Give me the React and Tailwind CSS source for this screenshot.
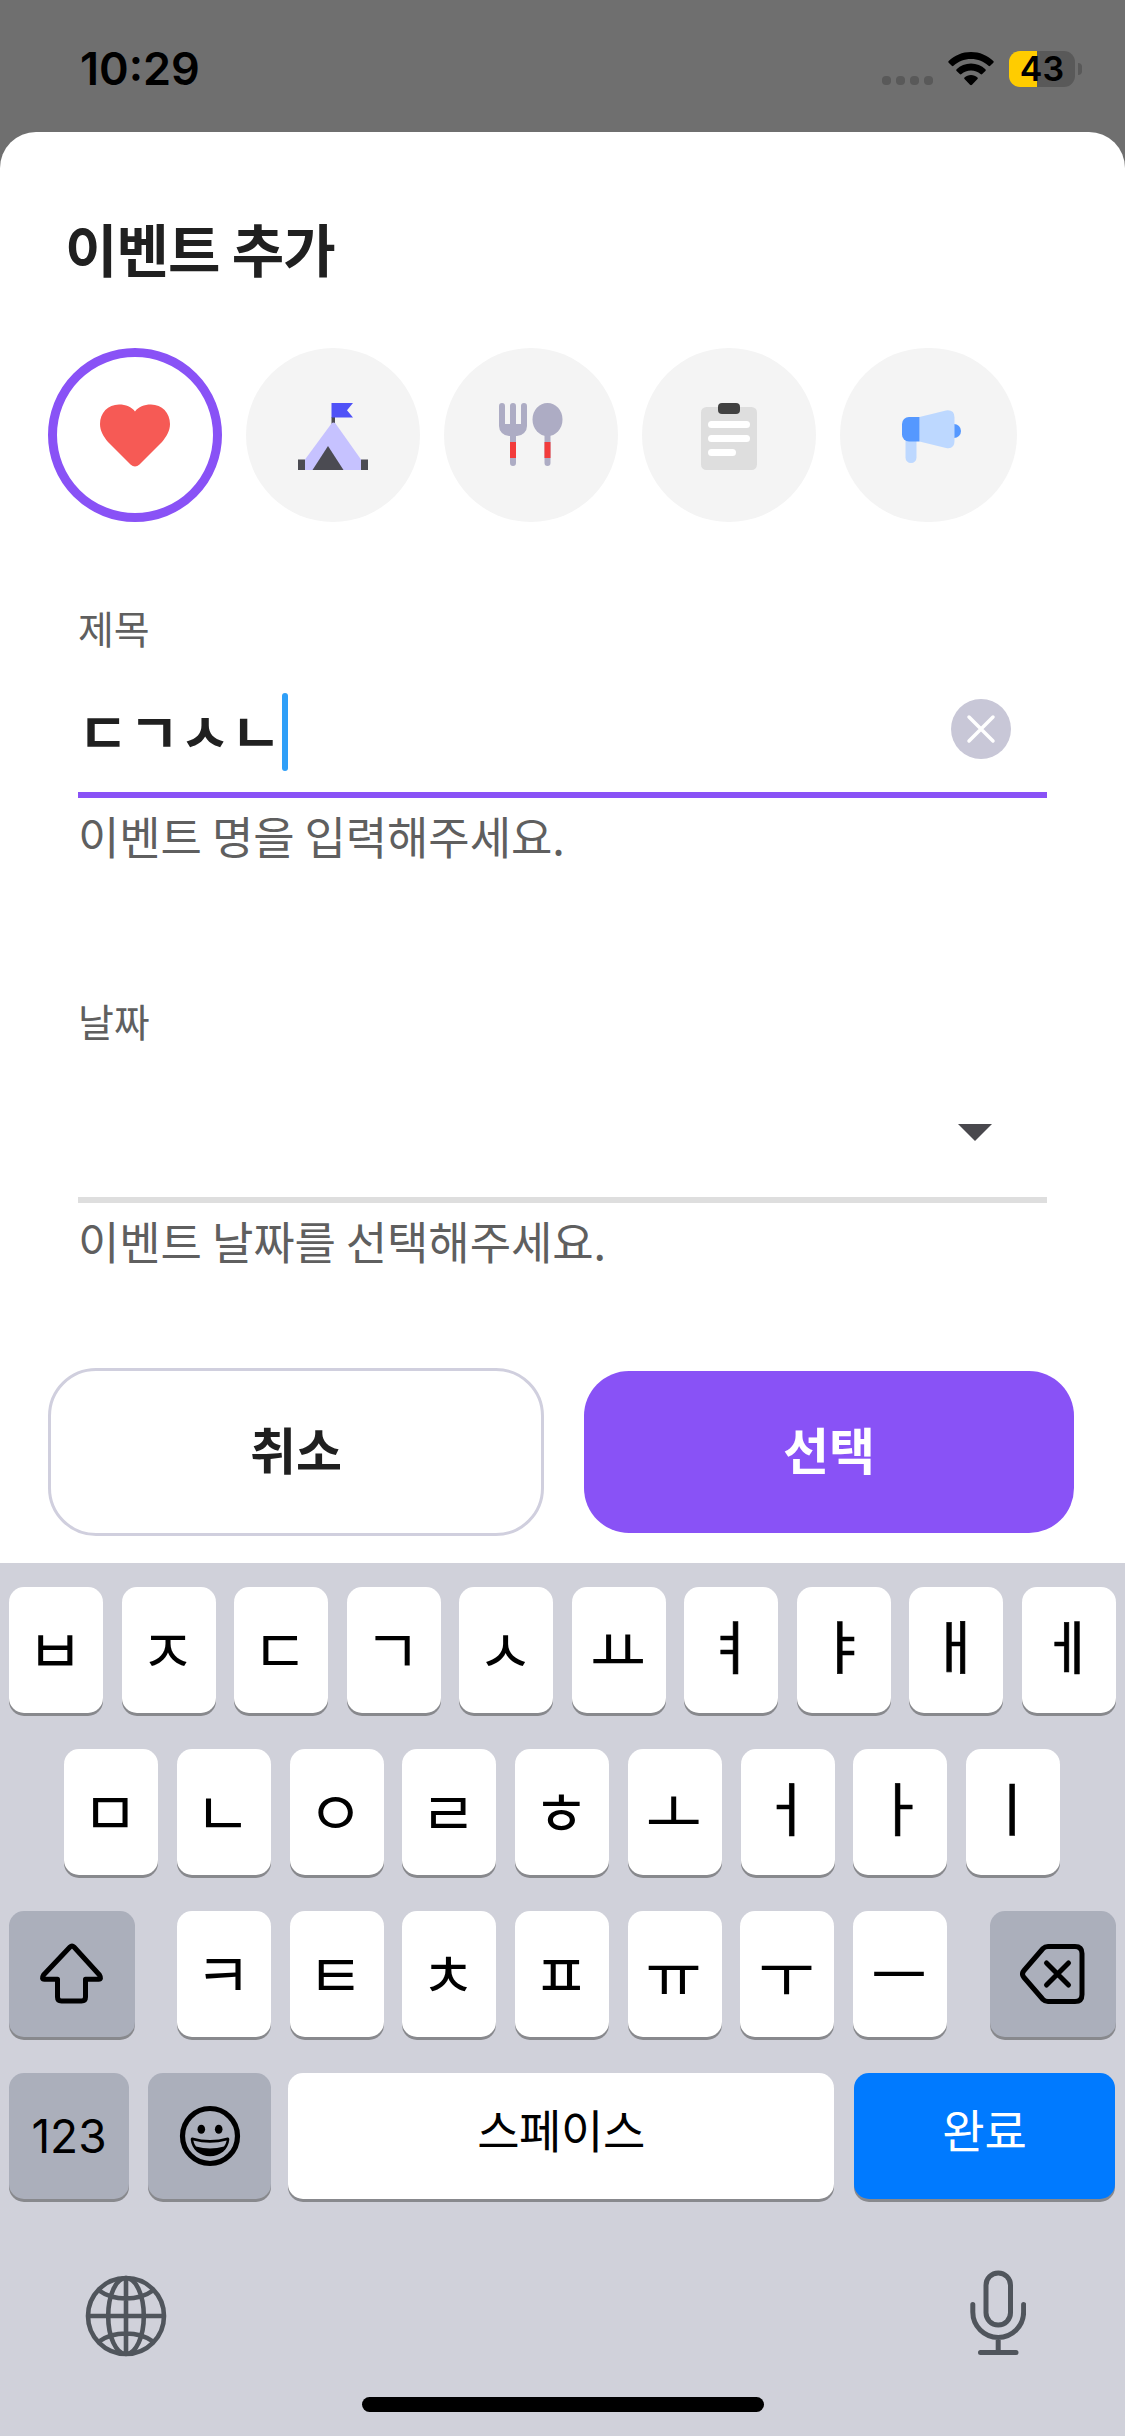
const kr = "font-['Noto_Sans_CJK_KR',sans-serif]";

const Heart = () => (
  <svg width="70" height="63" viewBox="0 0 70 63">
    <path d="M35 7.500C38.500 3 44 .6 51 .6C62 .6 70 9 70 20C70 27 66.500 32.500 62 38L39.500 60.500Q35 64.500 30.500 60.500L8 38C3.500 32.500 0 27 0 20C0 9 8 .6 19 .6C26 .6 31.500 3 35 7.500Z" fill="#f65a55" />
  </svg>
);

const Tent = () => (
  <svg className="mt-1" width="70" height="68" viewBox="0 0 70 68">
    <path d="M33.500 14h3.500v8h-3.500z" fill="#4b4b52" />
    <path d="M33.500 0H55l-6 7.200L55 14.500H33.500z" fill="#4f52f7" />
    <path d="M0 56.500h7V67H0zM63 56.500h7V67h-7z" fill="#4b4b52" />
    <path d="M33.500 20.500Q35.500 18.500 37.500 20.500L63 56.500V67H7V56.500z" fill="#c6c2ff" />
    <path d="M30 43L45.500 67H14.500z" fill="#4b4b52" />
  </svg>
);

const Cutlery = () => (
  <svg width="64" height="64" viewBox="0 0 64 64" fill="#adacc4">
    <path d="M0 3a3 3 0 0 1 6 0v18h5V3a3 3 0 0 1 6 0v18h5V3a3 3 0 0 1 6 0v20a10 10 0 0 1-10 10h-1v27a3 3 0 0 1-6 0V33h-1A10 10 0 0 1 0 23z" />
    <ellipse cx="48.500" cy="16.500" rx="15" ry="16.500" />
    <path d="M45.500 30h6v30a3 3 0 0 1-6 0z" />
    <path d="M11 39h6v16h-6zM45.500 39h6v16h-6z" fill="#f23b3b" />
  </svg>
);

const Clipboard = () => (
  <svg className="mt-[3px]" width="56" height="67" viewBox="0 0 56 67">
    <rect y="4" width="56" height="63" rx="5.500" fill="#dedede" />
    <rect x="17" width="22" height="11" rx="4" fill="#414141" />
    <g fill="#fff">
      <rect x="7" y="18" width="42" height="7" rx="3.500" />
      <rect x="7" y="32" width="42" height="7" rx="3.500" />
      <rect x="7" y="46" width="28" height="7" rx="3.500" />
    </g>
  </svg>
);

const Megaphone = () => (
  <svg className="ml-[7px] mt-[3px]" width="60" height="53" viewBox="0 0 60 53">
    <path d="M3.500 28h11v19.500a5 5 0 0 1-11 0z" fill="#bdd8ff" />
    <path d="M52 14a7 7 0 0 1 0 14z" fill="#5598ff" />
    <path d="M17.500 7L44 .4Q52.500-.6 52.500 7.500V31Q52.500 39.500 44 38L17.500 31.500z" fill="#bdd8ff" />
    <path d="M17.500 7v24.500H7a7 7 0 0 1-7-7V14a7 7 0 0 1 7-7z" fill="#5598ff" />
  </svg>
);

const Wifi = () => (
  <svg width="46" height="34" viewBox="0 0 46 34">
    <path d="M23 0C31.700 0 39.500 3.400 45.300 8.900Q46.200 9.800 45.300 10.700L42.200 13.800Q41.400 14.500 40.500 13.700C35.900 9.500 29.800 7 23 7S10.100 9.500 5.500 13.700Q4.600 14.500 3.800 13.800L.7 10.700Q-.2 9.800.7 8.900C6.500 3.400 14.300 0 23 0Z" />
    <path d="M23 11.500C28.600 11.500 33.600 13.700 37.400 17.200Q38.300 18.100 37.400 19L34.200 22.100Q33.400 22.800 32.500 22.100C30 19.900 26.700 18.500 23 18.500S16 19.900 13.500 22.100Q12.600 22.800 11.800 22.100L8.600 19Q7.700 18.100 8.600 17.200C12.400 13.700 17.400 11.500 23 11.500Z" />
    <path d="M23 23C25.500 23 27.800 23.900 29.500 25.500Q30.300 26.300 29.500 27.100L24 32.700Q23 33.600 22 32.700L16.500 27.100Q15.700 26.300 16.500 25.500C18.200 23.900 20.500 23 23 23Z" />
  </svg>
);

const Shift = () => (
  <svg width="66" height="62" viewBox="0 0 66 62" fill="none" stroke="#000" strokeWidth="5" strokeLinejoin="round">
    <path d="M31 4Q33 2 35 4L60.500 32Q63 36 59.500 36.200H46.500V54Q46.500 58 42.500 58H22.500Q18.500 58 18.500 54V36.200H5.500Q2 36 4.500 32Z" />
  </svg>
);

const Backspace = () => (
  <svg width="66" height="60" viewBox="0 0 66 60" fill="none" stroke="#000" strokeWidth="5" strokeLinecap="round" strokeLinejoin="round">
    <path d="M23 4.500Q25 2.500 28 2.500H55Q62 2.500 62 9.500V50.500Q62 57.500 55 57.500H28Q25 57.500 23 55.500L4 33.500Q1 30 4 26.500Z" />
    <path d="M26.500 19L48.500 41M48.500 19L26.500 41" />
  </svg>
);

const Smile = () => (
  <svg width="62" height="62" viewBox="0 0 62 62">
    <circle cx="31" cy="31" r="27.500" fill="none" stroke="#000" strokeWidth="5.200" />
    <ellipse cx="22.300" cy="24.300" rx="3.800" ry="4.500" />
    <ellipse cx="39.700" cy="24.300" rx="3.800" ry="4.500" />
    <path d="M13.500 32.500Q31 37.500 48.500 32.500Q50.500 32.300 50.300 34.500C49.500 44.500 41 51.300 31 51.300S12.500 44.500 11.700 34.500Q11.500 32.300 13.500 32.500Z" />
    <path d="M14.300 35.500Q31 40 47.700 35.500Q47 39 45 41.500Q31 45.500 17 41.500Q15 39 14.300 35.500Z" fill="#abafbb" />
  </svg>
);

const Globe = () => (
  <svg width="82" height="82" viewBox="0 0 82 82" fill="none" stroke="#50555c" strokeWidth="4.600">
    <circle cx="41" cy="41" r="38" />
    <ellipse cx="41" cy="41" rx="17.800" ry="38" />
    <path d="M41 3v76M3 41h76M14 15.500Q25 23.500 41 23.500T68 15.500M14 66.500Q25 58.500 41 58.500T68 66.500" />
  </svg>
);

const Mic = () => (
  <svg width="56" height="86" viewBox="0 0 56 86" fill="none" stroke="#50555c" strokeWidth="5" strokeLinecap="round">
    <rect x="16" y="3" width="24.500" height="52" rx="12.250" />
    <path d="M2.800 34.500V42A25.400 25.400 0 0 0 53.600 42V34.500M28.200 68V82M10.500 82.500H46" />
  </svg>
);

function Field({ label, helper, line, children }) {
  return (
    <div className="mx-[78px] flex flex-col">
      <div className="h-[58px] text-[39px] leading-[58px] tracking-[-0.2px] text-[#5f5f5f]">{label}</div>
      {children}
      <div className={`h-1.5 ${line}`} />
      <div className="mt-[6px] h-[64px] text-[45px] leading-[64px] tracking-[-0.1px] text-[#5f5f5f]">{helper}</div>
    </div>
  );
}

function Key({ children, className = "w-[94px] bg-white" }) {
  return (
    <div className={`flex h-[126px] shrink-0 items-center justify-center rounded-[15px] text-black shadow-[0_3px_0_#88898d] ${className}`}>
      {children}
    </div>
  );
}

const tallVowels = "ㅕㅑㅐㅔㅓㅏㅣ";

const Jamo = ({ c }) => (
  <Key>
    <span
      className={`mr-[2px] leading-[80px] ${
        tallVowels.includes(c)
          ? "mb-[12px] text-[58px] [-webkit-text-stroke:0.6px_black]"
          : "mb-[4px] text-[61px]"
      }`}
    >
      {c}
    </span>
  </Key>
);

export default function App() {
  return (
    <div className={`flex h-[2436px] w-[1125px] flex-col overflow-hidden bg-[#6f6f6f] ${kr}`}>
      <div className="flex h-[132px] items-start justify-between pl-20 pr-[43px] pt-[42px]">
        <div className="font-[Inter,sans-serif] text-[45px] font-semibold leading-[54px] text-black">10:29</div>
        <div className="mt-[9px] flex items-center">
          <div className="mr-[15px] mt-[22px] flex gap-[5px]">
            {[0, 1, 2, 3].map((i) => (
              <div key={i} className="size-[9px] rounded-[4px] bg-[#595959]" />
            ))}
          </div>
          <Wifi />
          <div className="ml-[15px] flex h-9 w-[66px] items-center justify-center rounded-[11px] bg-[linear-gradient(90deg,#ffcc00_43%,#595959_43%)] font-[Inter,sans-serif] text-[34px] font-semibold leading-9 text-black">
            43
          </div>
          <div className="ml-[3px] h-3 w-1 rounded-r-full bg-[#595959]" />
        </div>
      </div>

      <div className="flex h-[1431px] shrink-0 flex-col rounded-t-[36px] bg-white">
        <h1 className="ml-[65px] mt-[75px] h-[80px] text-[57px] font-bold leading-[80px] tracking-[-0.9px] text-[#202020]">이벤트 추가</h1>
        <div className="ml-12 mt-[61px] flex gap-6">
          <div className="flex size-[174px] items-center justify-center rounded-full border-[9px] border-[#8952f6]"><Heart /></div>
          <div className="flex size-[174px] items-center justify-center rounded-full bg-[#f4f4f4]"><Tent /></div>
          <div className="flex size-[174px] items-center justify-center rounded-full bg-[#f4f4f4]"><Cutlery /></div>
          <div className="flex size-[174px] items-center justify-center rounded-full bg-[#f4f4f4]"><Clipboard /></div>
          <div className="flex h-[174px] w-[177px] items-center justify-center rounded-full bg-[#f4f4f4]"><Megaphone /></div>
        </div>

        <div className="mt-[76px]">
          <Field label="제목" helper="이벤트 명을 입력해주세요." line="bg-[#8952f6]">
            <div className="flex h-[136px] items-center pr-9 pt-[10px]">
              <span className="text-[55px] font-bold leading-[80px] tracking-[0.3px] text-[#202020]">ㄷㄱㅅㄴ</span>
              <span className="mt-[6px] h-[78px] w-1.5 rounded-full bg-[#2f9ff8]" />
              <svg className="ml-auto" width="60" height="60" viewBox="0 0 60 60">
                <circle cx="30" cy="30" r="30" fill="#c8c7d7" />
                <path d="M18 18L42 42M42 18L18 42" stroke="#fff" strokeWidth="3.500" strokeLinecap="round" />
              </svg>
            </div>
          </Field>
        </div>
        <div className="mt-[123px]">
          <Field label="날짜" helper="이벤트 날짜를 선택해주세요." line="bg-[#dedede]">
            <div className="flex h-[148px] items-center justify-end pr-[55px] pt-[18px]">
              <svg width="34" height="17" viewBox="0 0 34 17"><path d="M0 0h34L17 17z" fill="#49484d" /></svg>
            </div>
          </Field>
        </div>

        <div className="mb-[27px] mt-auto flex items-center px-12 text-[50px] font-bold">
          <div className="flex h-[168px] w-[496px] items-center justify-center rounded-[48px] border-[3px] border-[#d0cfde] pb-[8px] text-[#202020]">취소</div>
          <div className="ml-10 flex h-[162px] w-[490px] items-center justify-center rounded-[45px] bg-[#8952f6] pb-[8px] text-white">선택</div>
        </div>
      </div>

      <div className="flex h-[873px] shrink-0 flex-col bg-[#d0d1da] pt-6">
        <div className="flex justify-between px-[9px]">
          {[..."ㅂㅈㄷㄱㅅㅛㅕㅑㅐㅔ"].map((c) => <Jamo key={c} c={c} />)}
        </div>
        <div className="mt-9 flex justify-between pl-16 pr-[65px]">
          {[..."ㅁㄴㅇㄹㅎㅗㅓㅏㅣ"].map((c) => <Jamo key={c} c={c} />)}
        </div>
        <div className="mt-9 flex px-[9px]">
          <Key className="w-[126px] bg-[#abafbb]"><Shift /></Key>
          <div className="ml-[42px] flex w-[770px] justify-between">
            {[..."ㅋㅌㅊㅍㅠㅜㅡ"].map((c) => <Jamo key={c} c={c} />)}
          </div>
          <Key className="ml-auto w-[126px] bg-[#abafbb]"><Backspace /></Key>
        </div>
        <div className="mt-9 flex pl-[9px]">
          <Key className="w-[120px] bg-[#abafbb]"><span className="font-[Inter,sans-serif] text-[46px]">123</span></Key>
          <Key className="ml-[19px] w-[123px] bg-[#abafbb]"><Smile /></Key>
          <Key className="ml-[17px] w-[546px] bg-white"><span className="mb-[16px] text-[46px] tracking-[-0.4px]">스페이스</span></Key>
          <Key className="ml-[20px] w-[261px] bg-[#007aff]"><span className="mb-[15px] text-[46px] text-white">완료</span></Key>
        </div>
        <div className="mt-[71px] flex justify-between pl-[85px] pr-[99px]">
          <div className="pt-[5px]"><Globe /></div>
          <Mic />
        </div>
        <div className="mx-auto mb-6 mt-auto h-[15px] w-[402px] rounded-full bg-black" />
      </div>
    </div>
  );
}
